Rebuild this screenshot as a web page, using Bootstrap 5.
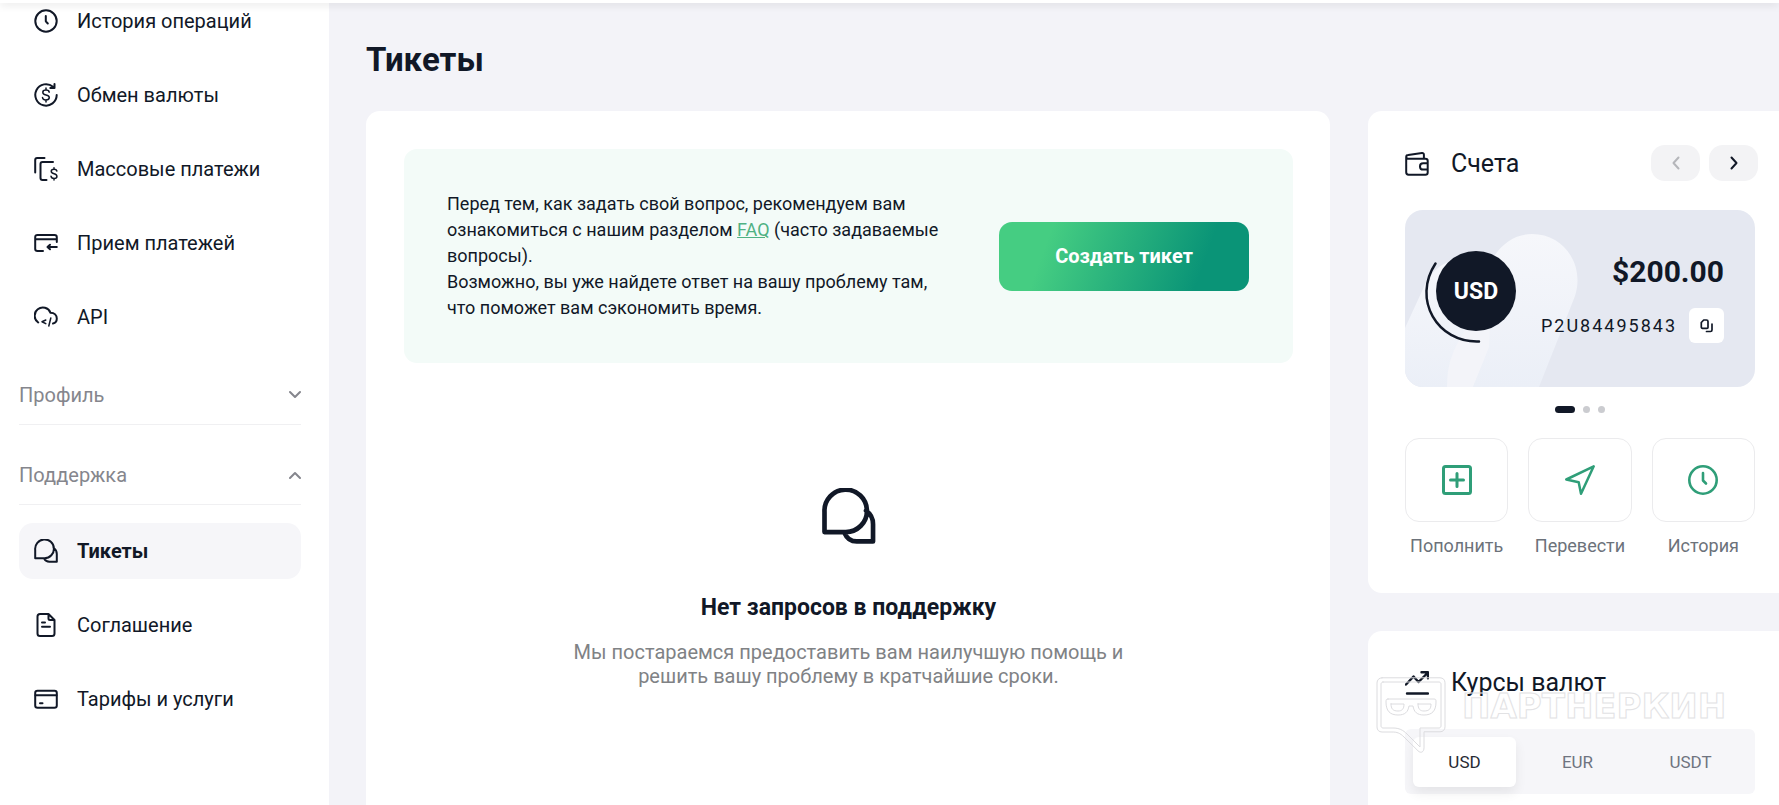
<!DOCTYPE html>
<html lang="ru">
<head>
<meta charset="utf-8">
<meta name="viewport" content="width=device-width, initial-scale=1">
<title>Тикеты</title>
<link href="https://cdn.jsdelivr.net/npm/bootstrap@5.3.0/dist/css/bootstrap.min.css" rel="stylesheet">
<style>
:root{--ink:#111827;--muted:#85868d;--page:#f3f3f8;--soft:#f6f6f9;--green:#2f9e78}
body{font-family:Roboto,"Noto Sans",sans-serif;font-size:20px;line-height:24px;color:var(--ink);background:var(--page)}
svg{fill:none;stroke:currentColor;stroke-width:2;stroke-linecap:round;stroke-linejoin:round;flex:none}
h1,h2,p{margin:0}
.topbar{height:3px;box-shadow:0 1px 8px rgba(0,0,0,.18);z-index:2}
.sidebar{width:329px;padding:0 28px 0 19px}
.side-list{margin-top:-10px}
.side-list,.sub-list{gap:18px}
.side-link{height:56px;padding:0 15px;gap:19px;border-radius:14px;color:var(--ink);text-decoration:none}
.side-link.active{background:var(--soft);font-weight:700}
.side-group{padding:35px 0 14px;border:0;border-bottom:1px solid #f0f0f2;background:none;color:var(--muted);line-height:30px}
.sub-list{padding-top:18px}
.content-area{padding:35px 0 0 37px}
h1{font-size:33px;line-height:44px;font-weight:700;margin-bottom:29px}
.panes{gap:38px}
.panel{background:#fff;border-radius:14px}
.tickets{padding:38px 37px 38px 38px;border-radius:14px 14px 0 0}
.notice{background:#f3fbf8;border-radius:13px;padding:42px 44px 42px 43px;font-size:18px;line-height:26px}
.notice-text{max-width:500px}
.notice a{color:#4fb183}
.btn-create{width:250px;height:69px;border-radius:13px;border:0;color:#fff;font-size:20px;font-weight:700;background:linear-gradient(110deg,#45cd82 20%,#0a9477 80%)}
.btn-create:hover{color:#fff}
.empty{padding-top:125px}
.empty h2{font-size:23px;line-height:28px;font-weight:700;margin:50px 0 18px}
.empty p{color:#808285;max-width:570px}
.rail{width:411px;gap:38px}
.rail .panel{border-radius:14px 0 0 14px;padding:34px 24px 35px 37px}
.rail .panel.rates{border-radius:14px 0 0 0;padding:33px 24px 11px 37px}
.rail h2{font-size:25px;line-height:38px;font-weight:400}
.rates .rail-title svg{stroke-width:3}
.rail-title{gap:22px}
.arrow-btn{width:49px;height:36px;border:0;border-radius:14px;background:#f3f3f5;color:var(--ink)}
.arrow-btn:disabled{color:#b5b6ba}
.arrows{gap:9px;margin-right:-3px}
.account{margin-top:27px;height:177px;border-radius:18px;background:#e5e8f1;padding:42px 31px 0 0}
.account-art{inset:0;width:350px;height:177px}
.balance{font-size:30px;line-height:40px;font-weight:700}
.acc-number{letter-spacing:2px;font-size:18px}
.copy-btn{width:35px;height:35px;border:0;border-radius:6px;background:#fff;color:var(--ink)}
.slide-dots{gap:8px;margin-top:19px}
.slide-dots span{width:7px;height:7px;border-radius:4px;background:#cbccd0}
.slide-dots span:first-child{width:20px;background:var(--ink)}
.quick{gap:20px;margin-top:25px}
.quick a{color:#6c727a;text-decoration:none;font-size:18px}
.quick svg{stroke-width:3}
.quick-tile{height:84px;border:1px solid #ebebed;border-radius:14px;color:var(--green);margin-bottom:12px}
.currency-tabs{background:var(--soft);border-radius:6px;padding:8px 13px 7px 8px;gap:10px;margin-top:27px}
.currency-tabs button{height:50px;border:0;border-radius:6px;background:none;color:#6f7480;font-size:17px}
.currency-tabs button.active{background:#fff;color:#272b33;box-shadow:0 6px 12px rgba(0,0,0,.07)}
.brandmark{left:8px;top:46px;color:#dcdcdf;gap:16px;pointer-events:none}
.brandmark svg{stroke-width:1}
.brand-name{font:bold 34px/36px "DejaVu Sans",sans-serif;color:transparent;-webkit-text-stroke:1px #e2e2e4;padding-top:11px}
</style>
</head>
<body class="d-flex flex-column min-vh-100">
<header class="topbar bg-white position-relative"></header>
<div class="d-flex flex-grow-1">
  <aside class="sidebar bg-white flex-shrink-0">
    <nav class="side-list d-flex flex-column">
      <a href="#" class="side-link d-flex align-items-center"><svg width="24" height="24" viewBox="0 0 24 24"><circle cx="12" cy="12" r="10.7"/><path d="M11.8 7v5.3l2 2.2"/></svg>История операций</a>
      <a href="#" class="side-link d-flex align-items-center"><svg width="24" height="24" viewBox="0 0 24 24"><path d="M19 3.8A10.7 10.7 0 1 0 22.7 12M20.5 1v4h-4.2" /><path stroke-width="1.5" d="M15.200 9.200c-.2-1.500-1.500-2.100-3.200-2.100-4.200 0-4.300 4 0 4.800 4.500.8 4.300 5-.2 5-1.900 0-3.200-.9-3.300-2.400M12 5v2M12 17v2"/></svg>Обмен валюты</a>
      <a href="#" class="side-link d-flex align-items-center"><svg width="24" height="24" viewBox="0 0 24 24"><path d="M1.200 15.500V3c0-1.300.6-2 2-2h7.300M19 5H8.500c-1.300 0-2 .7-2 2v14c0 1.300.7 2 2 2h4"/><path stroke-width="1.500" d="M22.900 14c-.3-1-1.300-1.700-2.800-1.700-3.800 0-3.800 3.500 0 4.400 3.800.9 3.700 4.700 0 4.700-1.700 0-2.900-.7-3.100-2.200M20 10.800v1.500M20 21.400v1.500"/></svg>Массовые платежи</a>
      <a href="#" class="side-link d-flex align-items-center"><svg width="24" height="24" viewBox="0 0 24 24"><path d="M9 20H3.500C2 20 1.200 19.200 1.200 18V6.200c0-1.400.8-2.200 2.300-2.200h17c1.500 0 2.300.8 2.300 2.200V11M1.500 8.300h21M22.800 16H13.500M16 13.700l-2.500 2.300 2.500 2.300"/></svg>Прием платежей</a>
      <a href="#" class="side-link d-flex align-items-center"><svg width="24" height="24" viewBox="0 0 24 24"><path d="M4.200 17.500A8.200 8.200 0 1 1 16.500 7.800c4 0 6.300 2.700 6.300 5.800 0 2.500-1.500 4.600-3.800 4.900"/><path stroke-width="1.500" d="M11.800 15l-3.800 1.800 3.800 1.800M16.800 13l-2 8"/></svg>API</a>
    </nav>
    <button class="side-group w-100 d-flex justify-content-between align-items-center">Профиль<svg width="12" height="14" viewBox="1 0 12 14"><path d="M2 4l5 5 5-5"/></svg></button>
    <button class="side-group w-100 d-flex justify-content-between align-items-center">Поддержка<svg width="12" height="14" viewBox="1 0 12 14"><path d="M2 10l5-5 5 5"/></svg></button>
    <nav class="sub-list d-flex flex-column">
      <a href="#" class="side-link active d-flex align-items-center"><svg width="24" height="24" viewBox="0 0 24 24"><path d="M1.200 19.200V10.800a9.400 9.400 0 1 1 9.400 8.400zM19.500 8.800c2.100 1.500 3.300 3.700 3.300 6.200v7.700h-7.500c-2.300 0-4.100-1.200-5.200-3.200"/></svg>Тикеты</a>
      <a href="#" class="side-link d-flex align-items-center"><svg width="24" height="24" viewBox="0 0 24 24"><path d="M14.500 1H6C4.300 1 3.500 1.800 3.500 3.500v17c0 1.700.8 2.500 2.500 2.500h12c1.700 0 2.500-.8 2.500-2.500V7zM14.500 1v4.500c0 1 .5 1.500 1.500 1.500h4.500M8 9.500h3M8 13.700h8"/></svg>Соглашение</a>
      <a href="#" class="side-link d-flex align-items-center"><svg width="24" height="24" viewBox="0 0 24 24"><rect x="1.200" y="3.700" width="21.600" height="17" rx="2.300"/><path d="M1.500 8.300h21M6 16.300h2.500"/></svg>Тарифы и услуги</a>
    </nav>
  </aside>
  <main class="content-area flex-grow-1 d-flex flex-column">
    <h1>Тикеты</h1>
    <div class="panes d-flex flex-grow-1">
      <section class="panel tickets flex-grow-1">
        <div class="notice d-flex justify-content-between align-items-center">
          <p class="notice-text">Перед тем, как задать свой вопрос, рекомендуем вам ознакомиться с нашим разделом <a href="#">FAQ</a> (часто задаваемые вопросы).<br>Возможно, вы уже найдете ответ на вашу проблему там, что поможет вам сэкономить время.</p>
          <button class="btn btn-create flex-shrink-0">Создать тикет</button>
        </div>
        <div class="empty d-flex flex-column align-items-center text-center">
          <svg width="56" height="56" viewBox="0 0 24 24"><path d="M1.500 18.900V10.200a9.100 9.100 0 1 1 9.100 8.700zM19.300 9.700c2 1.400 3 3.400 3 5.800v7.400h-7c-2.500 0-4.200-1.200-5.200-3.600"/></svg>
          <h2>Нет запросов в поддержку</h2>
          <p>Мы постараемся предоставить вам наилучшую помощь и решить вашу проблему в кратчайшие сроки.</p>
        </div>
      </section>
      <div class="rail flex-shrink-0 d-flex flex-column">
        <section class="panel">
          <div class="d-flex justify-content-between">
            <div class="rail-title d-flex align-items-center">
              <svg width="24" height="24" viewBox="0 0 24 24"><path d="M22.700 11V9c0-1.500-.8-2.300-2.300-2.300H3.200C2 6.700 1.200 6 1.200 5s.8-1.900 2-2L17 1.100c1.200-.1 1.900.5 1.900 1.600v4M1.200 5v15.300c0 1.600.8 2.400 2.300 2.400h16.900c1.500 0 2.300-.8 2.300-2.300v-2.700M22.700 11.200h-4.500c-4.300 0-4.300 6.400 0 6.400h4.500z"/></svg>
              <h2>Счета</h2>
            </div>
            <div class="arrows d-flex align-items-start">
              <button class="arrow-btn d-flex align-items-center justify-content-center" disabled aria-label="Назад"><svg width="14" height="14" viewBox="0 0 14 14"><path d="M9.500 1.500l-5 5.500 5 5.500"/></svg></button>
              <button class="arrow-btn d-flex align-items-center justify-content-center" aria-label="Вперёд"><svg width="14" height="14" viewBox="0 0 14 14"><path d="M4.500 1.500l5 5.500-5 5.500"/></svg></button>
            </div>
          </div>
          <div class="account position-relative overflow-hidden d-flex flex-column align-items-end">
            <svg class="account-art position-absolute" viewBox="0 0 350 177">
              <defs><linearGradient id="fade" x1="0" y1="0" x2="0" y2="1"><stop offset="0" stop-color="#f6f7fb"/><stop offset="1" stop-color="#ebeff7"/></linearGradient></defs>
              <g stroke="none"><path fill="url(#fade)" d="M0 118L18 79C28 50 62 40 84 57c20 16 21 38 14 58L73 177H0z"/><path fill="#f3f4f9" d="M42 177c0-26 8-40 18-57h32L68 177z"/><path fill="url(#fade)" d="M68 177L84 137 88 48C98 32 111 24 127 24c32 0 53 31 43 62L134 177z"/></g>
              <circle cx="71" cy="81" r="40" fill="#111827" stroke="none"/><path stroke-width="2.500" d="M30.500 53.500C7 89 32 133 74 131.500"/>
              <text x="71" y="89" text-anchor="middle" font-size="23" font-weight="700" fill="#fff" stroke="none">USD</text>
            </svg>
            <div class="balance position-relative">$200.00</div>
            <div class="d-flex align-items-center position-relative mt-3 gap-2">
              <span class="acc-number me-1">P2U84495843</span>
              <button class="copy-btn d-flex align-items-center justify-content-center p-0" aria-label="Копировать"><svg width="14" height="14" viewBox="0 0 14 14"><path stroke-width="1.700" d="M3.700 1h2.800C7.500 1 8 1.500 8 2.500v6C8 9 7.700 9.300 7 9.300H2.500c-.8 0-1.200-.5-1.200-1.300V3.500zM12 5v6c0 1-.5 1.500-1.500 1.500H6.500"/></svg></button>
            </div>
          </div>
          <div class="slide-dots d-flex justify-content-center"><span></span><span></span><span></span></div>
          <div class="quick d-flex text-center">
            <a href="#" class="col"><div class="quick-tile d-flex align-items-center justify-content-center"><svg width="30" height="30" viewBox="0 0 30 30"><rect x="1.500" y="1.500" width="27" height="27" rx="2"/><path d="M15 8.500v13M8.500 15h13"/></svg></div>Пополнить</a>
            <a href="#" class="col"><div class="quick-tile d-flex align-items-center justify-content-center"><svg width="30" height="30" viewBox="0 0 30 30"><path stroke-width="2.500" d="M28.700 1.300L1.300 14.500l12.400 2.700L16 28.700z"/></svg></div>Перевести</a>
            <a href="#" class="col"><div class="quick-tile d-flex align-items-center justify-content-center"><svg width="30" height="30" viewBox="0 0 30 30"><g stroke-width="2.600"><circle cx="15" cy="15" r="13.700"/><path d="M15 8v7.500l3 3"/></g></svg></div>История</a>
          </div>
        </section>
        <section class="panel rates position-relative flex-grow-1">
          <div class="rail-title d-flex align-items-center">
            <svg width="24" height="24" viewBox="0 0 24 24"><g stroke-width="2.400"><path d="M1 13.500l7.500-8 5 5.500L23 1.500M16.500 1.200h6.500v6M2 22.500h21"/></g></svg>
            <h2>Курсы валют</h2>
          </div>
          <div class="currency-tabs d-flex">
            <button class="active col">USD</button><button class="col">EUR</button><button class="col">USDT</button>
          </div>
          <div class="brandmark position-absolute d-flex align-items-start">
            <svg width="70" height="76" viewBox="0 0 70 76"><path d="M6 .8h58c3 0 5 2 5 5v44c0 3-2 5-5 5H48v16c0 4-3 6-6 3L28 60c-4-4-7-5-12-5H6c-3 0-5-2-5-5V6c0-3 2-5.200 5-5.200z"/><path d="M7 5h56c1 0 2 1 2 2v42c0 1-1 2-2 2H44v19L31 57c-4-4-8-6-14-6H7c-1 0-2-1-2-2V7c0-1 1-2 2-2zM12 22h46c2 0 2 1 2 3 0 9-4 13-12 13-7 0-10-3-11-9h-4c-1 6-4 9-11 9-8 0-12-4-12-13 0-2 0-3 2-3z"/><path d="M15 27h13c0 5-2 7-6 7-5 0-7-2-7-7zM42 27h13c0 5-2 7-7 7-4 0-6-2-6-7z"/></svg>
            <span class="brand-name">ПАРТНЕРКИН</span>
          </div>
        </section>
      </div>
    </div>
  </main>
</div>
<script src="https://cdn.jsdelivr.net/npm/bootstrap@5.3.0/dist/js/bootstrap.bundle.min.js"></script>
</body>
</html>
